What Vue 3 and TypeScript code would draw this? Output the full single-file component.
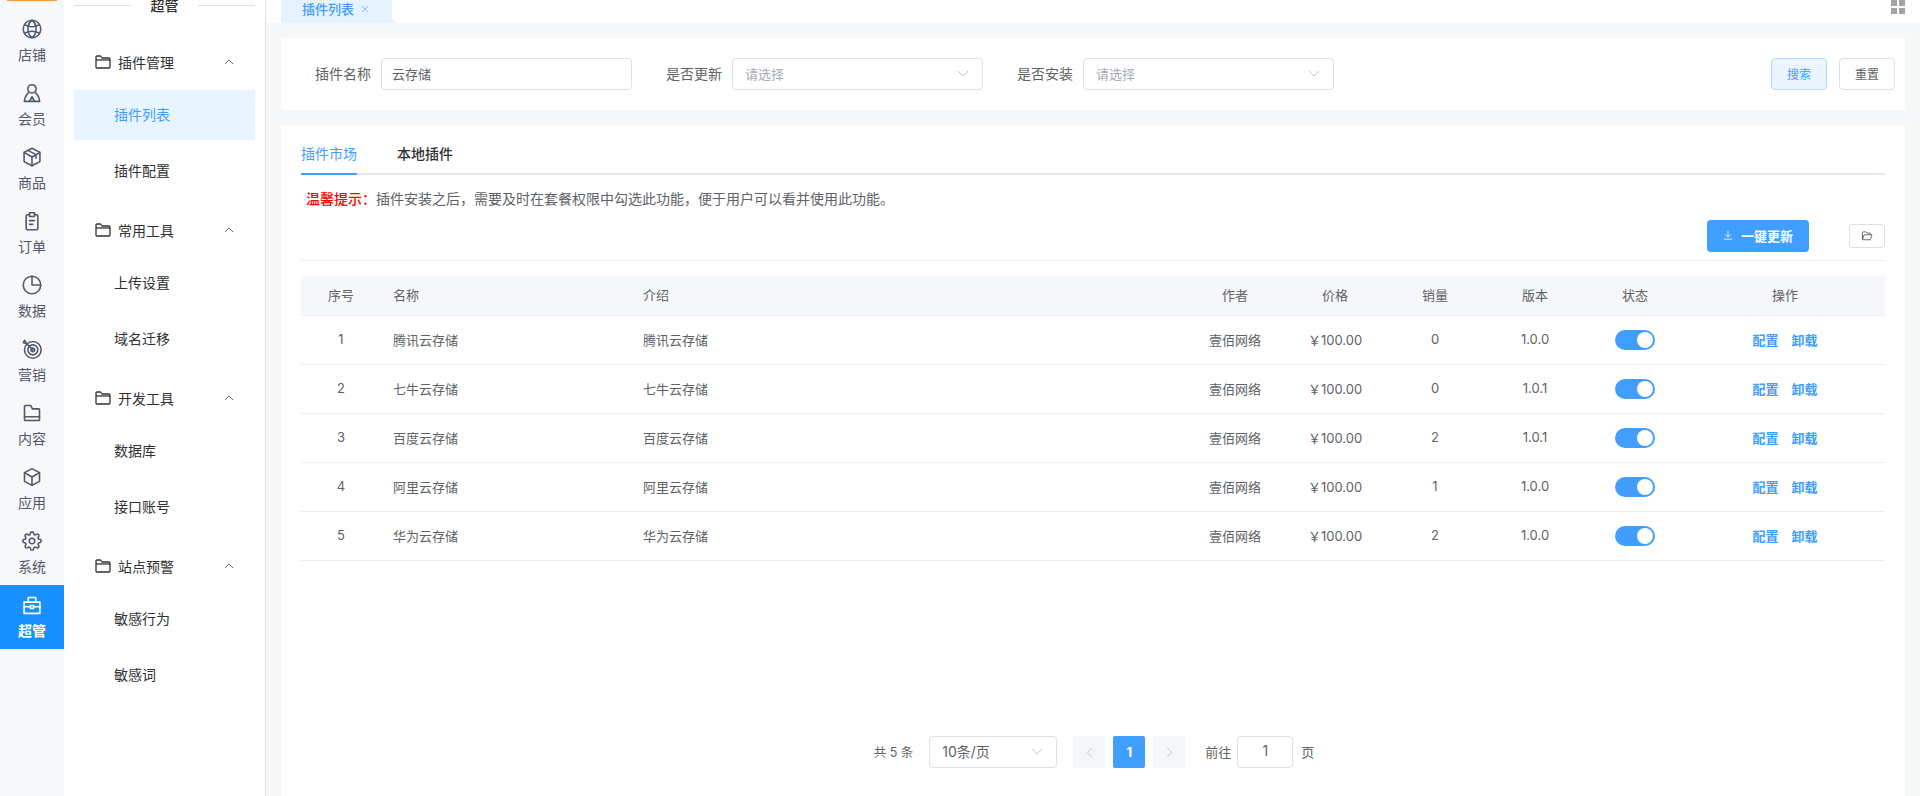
<script setup lang="ts">
import { ref } from 'vue'

const ring = (cx: number, cy: number, r: number): string =>
  `M${cx - r} ${cy}a${r} ${r} 0 1 0 ${2 * r} 0a${r} ${r} 0 1 0 ${-2 * r} 0z`

const gear =
  'M19.4 15a1.65 1.65 0 0 0 .33 1.82l.06.06a2 2 0 0 1 0 2.83 2 2 0 0 1-2.83 0l-.06-.06a1.65 1.65 0 0 0-1.82-.33 1.65 1.65 0 0 0-1 1.51V21a2 2 0 0 1-2 2 2 2 0 0 1-2-2v-.09A1.65 1.65 0 0 0 9 19.4a1.65 1.65 0 0 0-1.82.33l-.06.06a2 2 0 0 1-2.83 0 2 2 0 0 1 0-2.83l.06-.06a1.65 1.65 0 0 0 .33-1.82 1.65 1.65 0 0 0-1.51-1H3a2 2 0 0 1-2-2 2 2 0 0 1 2-2h.09A1.65 1.65 0 0 0 4.6 9a1.65 1.65 0 0 0-.33-1.82l-.06-.06a2 2 0 0 1 0-2.83 2 2 0 0 1 2.83 0l.06.06a1.65 1.65 0 0 0 1.82.33H9a1.65 1.65 0 0 0 1-1.51V3a2 2 0 0 1 2-2 2 2 0 0 1 2 2v.09a1.65 1.65 0 0 0 1 1.51 1.65 1.65 0 0 0 1.82-.33l.06-.06a2 2 0 0 1 2.83 0 2 2 0 0 1 0 2.83l-.06.06a1.65 1.65 0 0 0-.33 1.82V9a1.65 1.65 0 0 0 1.51 1H21a2 2 0 0 1 2 2 2 2 0 0 1-2 2h-.09a1.65 1.65 0 0 0-1.51 1z'

interface RailItem {
  label: string
  paths: string[]
  active?: boolean
}

const railItems: RailItem[] = [
  { label: '店铺', paths: [ring(12, 12, 10.5), 'M12 1.5c-6.5 5-6.5 16 0 21c6.5-5 6.5-16 0-21z', 'M3.5 7c5 2.6 12 2.6 17 0', 'M3.5 17c5-2.6 12-2.6 17 0'] },
  { label: '会员', paths: [ring(12, 7, 5), 'M8 11.5C5 14 3.3 17.5 2.8 22H21.2C20.7 17.5 19 14 16 11.5', 'M9 22L12 16.5L15 22'] },
  { label: '商品', paths: ['M12 1.5L21.5 6.5V17.5L12 22.5L2.5 17.5V6.5Z', 'M2.5 6.5L12 12L21.5 6.5', 'M12 12V22.5', 'M7.2 4L16.8 9.2V13.5'] },
  { label: '订单', paths: ['M8.5 4.5H6.5a1.5 1.5 0 0 0-1.5 1.5V21a1.5 1.5 0 0 0 1.5 1.5H17.5a1.5 1.5 0 0 0 1.5-1.5V6a1.5 1.5 0 0 0-1.5-1.5H15.5', 'M9 2H15V6.5H9Z', 'M9 11.5H15', 'M9 16H13'] },
  { label: '数据', paths: [ring(12, 12, 10.5), 'M12 1.5V12H22.5'] },
  { label: '营销', paths: [ring(13, 13, 10), ring(13, 13, 6), ring(13, 13, 2.2), 'M13 13L5 5', 'M5 5L1.5 4.5L3 1.5L5 5'] },
  { label: '内容', paths: ['M3 4a1 1 0 0 1 1-1H10.5L12.5 7H20a1 1 0 0 1 1 1V20a1 1 0 0 1-1 1H4a1 1 0 0 1-1-1Z', 'M3 16.5H21'] },
  { label: '应用', paths: ['M12 2L21 6.8V17.2L12 22L3 17.2V6.8Z', 'M3 6.8L12 12L21 6.8', 'M12 12V22'] },
  { label: '系统', paths: [gear, ring(12, 12, 3.3)] },
  { label: '超管', active: true, paths: ['M2.5 8.5H21.5V22H2.5Z', 'M7.5 8.5V3H16.5V8.5', 'M2.5 14H10', 'M14 14H21.5', 'M10 12.5H14V16H10Z'] },
]

interface MenuGroup {
  title: string
  items: string[]
}

const menuGroups: MenuGroup[] = [
  { title: '插件管理', items: ['插件列表', '插件配置'] },
  { title: '常用工具', items: ['上传设置', '域名迁移'] },
  { title: '开发工具', items: ['数据库', '接口账号'] },
  { title: '站点预警', items: ['敏感行为', '敏感词'] },
]

const keyword = ref('云存储')
const activeTab = ref('插件市场')
const tabs = ['插件市场', '本地插件']

const rows = ref([
  { id: 1, name: '腾讯云存储', version: '1.0.0', sales: 0, on: true },
  { id: 2, name: '七牛云存储', version: '1.0.1', sales: 0, on: true },
  { id: 3, name: '百度云存储', version: '1.0.1', sales: 2, on: true },
  { id: 4, name: '阿里云存储', version: '1.0.0', sales: 1, on: true },
  { id: 5, name: '华为云存储', version: '1.0.0', sales: 2, on: true },
])
</script>

<template>
  <div class="app">
    <aside class="rail">
      <div class="logo"></div>
      <a v-for="item in railItems" :key="item.label" class="rail-item" :class="{ active: item.active }">
        <svg class="rail-icon" viewBox="0 0 24 24" fill="none" stroke="currentColor" stroke-width="1.9" stroke-linejoin="round" stroke-linecap="round">
          <path v-for="d in item.paths" :key="d" :d="d" />
        </svg>
        <span>{{ item.label }}</span>
      </a>
    </aside>

    <nav class="subnav">
      <div class="subnav-title"><i></i><span>超管</span><i></i></div>
      <section v-for="group in menuGroups" :key="group.title" class="group">
        <div class="group-head">
          <svg class="folder" viewBox="0 0 16 14" fill="none" stroke="currentColor" stroke-width="1.3" stroke-linejoin="round">
            <path d="M1 2a1 1 0 0 1 1-1h3.6l1.4 2h7a1 1 0 0 1 1 1v8a1 1 0 0 1-1 1H2a1 1 0 0 1-1-1Z" />
            <path d="M1 5H15" />
          </svg>
          <span class="group-title">{{ group.title }}</span>
          <svg class="caret" viewBox="0 0 10 6" fill="none" stroke="currentColor" stroke-width="1">
            <path d="M1 5L5 1L9 5" />
          </svg>
        </div>
        <a v-for="m in group.items" :key="m" class="menu-item" :class="{ current: m === '插件列表' }">{{ m }}</a>
      </section>
    </nav>

    <main class="main">
      <header class="tagbar">
        <div class="tag">
          <span>插件列表</span>
          <svg class="tag-x" viewBox="0 0 10 10" fill="none" stroke="currentColor" stroke-width="1"><path d="M1 1L9 9M9 1L1 9" /></svg>
        </div>
        <div class="grid-icon"><i></i><i></i><i></i><i></i></div>
      </header>

      <div class="content">
        <form class="card filter" @submit.prevent>
          <label class="field">
            <span class="field-label">插件名称</span>
            <input v-model="keyword" class="text-input" />
          </label>
          <div class="field">
            <span class="field-label">是否更新</span>
            <div class="select">
              <span class="placeholder">请选择</span>
              <svg class="chev" viewBox="0 0 12 7" fill="none" stroke="currentColor" stroke-width="1"><path d="M1 1L6 6L11 1" /></svg>
            </div>
          </div>
          <div class="field">
            <span class="field-label">是否安装</span>
            <div class="select">
              <span class="placeholder">请选择</span>
              <svg class="chev" viewBox="0 0 12 7" fill="none" stroke="currentColor" stroke-width="1"><path d="M1 1L6 6L11 1" /></svg>
            </div>
          </div>
          <div class="actions">
            <button class="btn btn-soft" type="submit">搜索</button>
            <button class="btn" type="button">重置</button>
          </div>
        </form>

        <div class="card panel">
          <div class="tabs">
            <a v-for="t in tabs" :key="t" class="tab" :class="{ on: t === activeTab }" @click="activeTab = t">{{ t }}</a>
          </div>

          <p class="notice"><b>温馨提示：</b>插件安装之后，需要及时在套餐权限中勾选此功能，便于用户可以看并使用此功能。</p>

          <div class="toolbar">
            <button class="btn-primary" type="button">
              <svg viewBox="0 0 12 12" fill="none" stroke="currentColor" stroke-width="1"><path d="M6 1V8M3 5.5L6 8.5L9 5.5M1 11H11" /></svg>
              <span>一键更新</span>
            </button>
            <button class="btn-icon" type="button" aria-label="文件夹">
              <svg viewBox="0 0 14 12" fill="none" stroke="currentColor" stroke-width="1.1" stroke-linejoin="round"><path d="M1.5 10.5V2a1 1 0 0 1 1-1H5.5L7 2.5H11V4.5" /><path d="M1.5 10.5L3.5 4.5H13L11 10.5Z" /></svg>
            </button>
          </div>

          <table class="table">
            <colgroup>
              <col class="w80" /><col class="w250" /><col /><col class="w100" /><col class="w100" /><col class="w100" /><col class="w100" /><col class="w100" /><col class="w200" />
            </colgroup>
            <thead>
              <tr>
                <th class="c">序号</th><th>名称</th><th>介绍</th><th class="c">作者</th><th class="c">价格</th><th class="c">销量</th><th class="c">版本</th><th class="c">状态</th><th class="c">操作</th>
              </tr>
            </thead>
            <tbody>
              <tr v-for="r in rows" :key="r.id">
                <td class="c">{{ r.id }}</td>
                <td>{{ r.name }}</td>
                <td>{{ r.name }}</td>
                <td class="c">壹佰网络</td>
                <td class="c">￥100.00</td>
                <td class="c">{{ r.sales }}</td>
                <td class="c">{{ r.version }}</td>
                <td class="c sw"><span class="switch" :class="{ on: r.on }" @click="r.on = !r.on"><i></i></span></td>
                <td class="c ops"><a>配置</a><a>卸载</a></td>
              </tr>
            </tbody>
          </table>

          <div class="pager">
            <span class="total">共 5 条</span>
            <div class="select page-size">
              <span>10条/页</span>
              <svg class="chev" viewBox="0 0 12 7" fill="none" stroke="currentColor" stroke-width="1"><path d="M1 1L6 6L11 1" /></svg>
            </div>
            <button class="pg" type="button" aria-label="上一页"><svg viewBox="0 0 7 12" fill="none" stroke="currentColor" stroke-width="1"><path d="M6 1L1 6L6 11" /></svg></button>
            <button class="pg current" type="button">1</button>
            <button class="pg" type="button" aria-label="下一页"><svg viewBox="0 0 7 12" fill="none" stroke="currentColor" stroke-width="1"><path d="M1 1L6 6L1 11" /></svg></button>
            <span class="goto">前往</span>
            <div class="page-input">1</div>
            <span class="unit">页</span>
          </div>
        </div>
      </div>
    </main>
  </div>
</template>

<style>
html,
body {
  margin: 0;
  padding: 0;
  overflow: hidden;
}
</style>

<style scoped>
.app {
  display: flex;
  width: 1920px;
  height: 796px;
  overflow: hidden;
  font-family: Inter, "Noto Sans CJK SC", sans-serif;
  font-size: 14px;
  color: #606266;
  background: #f6f7f9;
}

/* rail */
.rail {
  width: 64px;
  flex: none;
  background: #f7f8fa;
}
.logo {
  width: 50px;
  height: 1px;
  margin: 0 auto 8px;
  background: #ff9a2e;
}
.rail-item {
  display: block;
  height: 64px;
  padding-top: 10px;
  box-sizing: border-box;
  text-align: center;
  color: #4e5969;
}
.rail-item span {
  display: block;
  margin-top: 5px;
  line-height: 22px;
}
.rail-icon {
  display: block;
  width: 20px;
  height: 20px;
  margin: 0 auto;
}
.rail-item.active {
  background: #1890ff;
  color: #fff;
}
.rail-item.active span {
  font-weight: 700;
}

/* sub navigation */
.subnav {
  width: 202px;
  flex: none;
  box-sizing: border-box;
  padding: 0 10px;
  background: #fff;
  border-right: 1px solid #dcdfe6;
  color: #303133;
}
.subnav-title {
  display: flex;
  align-items: center;
  justify-content: space-between;
  height: 20px;
  margin: -5px 0 22px;
  font-weight: 500;
}
.subnav-title i {
  display: block;
  width: 57px;
  height: 1px;
  background: #dcdfe6;
}
.group {
  padding-bottom: 3px;
}
.group-head {
  display: flex;
  align-items: center;
  height: 50px;
  margin-bottom: 3px;
  padding-left: 21px;
  padding-right: 21px;
}
.folder {
  width: 16px;
  height: 14px;
  margin-right: 7px;
  color: #303133;
}
.group-title {
  flex: 1;
}
.caret {
  width: 10px;
  height: 6px;
  color: #606266;
}
.menu-item {
  display: block;
  height: 50px;
  margin-bottom: 6px;
  padding-left: 40px;
  line-height: 50px;
}
.menu-item.current {
  background: #e8f4ff;
  color: #409eff;
}

/* main */
.main {
  flex: 1;
  min-width: 0;
  display: flex;
  flex-direction: column;
}
.tagbar {
  flex: none;
  display: flex;
  justify-content: space-between;
  height: 23px;
  padding: 0 15px;
  background: #fff;
}
.tag {
  position: relative;
  display: flex;
  align-items: flex-start;
  width: 111px;
  height: 23px;
  box-sizing: border-box;
  padding: 0 0 0 21px;
  background: #e5f2ff;
  color: #409eff;
  font-size: 13px;
  font-weight: 500;
  line-height: 18px;
}
.tag::after {
  content: "";
  position: absolute;
  left: 100%;
  bottom: 0;
  width: 8px;
  height: 8px;
  background: radial-gradient(circle at 100% 0, transparent 8px, #e5f2ff 8.5px);
}
.tag-x {
  width: 8px;
  height: 8px;
  margin: 5px 0 0 7px;
  color: #6fb0f5;
}
.grid-icon {
  display: grid;
  grid-template-columns: 6px 6px;
  grid-auto-rows: 6px;
  gap: 2px;
}
.grid-icon i {
  background: #a3a3a3;
}
.content {
  flex: 1;
  min-height: 0;
  display: flex;
  flex-direction: column;
  gap: 15px;
  padding: 15px 15px 0;
}
.card {
  background: #fff;
}

/* filter */
.filter {
  flex: none;
  display: flex;
  align-items: center;
  height: 72px;
  padding: 0 10px 0 34px;
}
.field {
  display: flex;
  align-items: center;
  margin-right: 34px;
}
.field-label {
  margin-right: 10px;
  padding-bottom: 2px;
  color: #606266;
}
.text-input {
  width: 251px;
  height: 32px;
  box-sizing: border-box;
  padding: 0 10px 2px;
  border: 1px solid #dcdfe6;
  border-radius: 4px;
  outline: none;
  font: inherit;
  font-size: 13px;
  color: #606266;
}
.select {
  display: flex;
  align-items: center;
  justify-content: space-between;
  width: 251px;
  height: 32px;
  box-sizing: border-box;
  padding: 0 13px 2px 12px;
  border: 1px solid #dcdfe6;
  border-radius: 4px;
  background: #fff;
  font-size: 13px;
}
.placeholder {
  color: #a8abb2;
}
.chev {
  width: 12px;
  height: 7px;
  color: #c0c4cc;
}
.actions {
  display: flex;
  gap: 12px;
  margin-left: auto;
}
.btn {
  width: 56px;
  height: 32px;
  padding: 0 0 2px;
  border: 1px solid #dcdfe6;
  border-radius: 4px;
  background: #fff;
  font: inherit;
  font-size: 12px;
  color: #606266;
}
.btn-soft {
  background: #ecf5ff;
  border-color: #b3d8ff;
  color: #409eff;
}

/* panel */
.panel {
  flex: 1;
  min-height: 0;
  display: flex;
  flex-direction: column;
  padding: 10px 20px 28px;
}
.tabs {
  flex: none;
  display: flex;
  gap: 40px;
  height: 40px;
  box-sizing: border-box;
  border-bottom: 2px solid #e4e7ed;
}
.tab {
  height: 40px;
  box-sizing: border-box;
  line-height: 38px;
  font-weight: 500;
  color: #303133;
}
.tab.on {
  border-bottom: 2px solid #409eff;
  color: #409eff;
  font-weight: 400;
}
.notice {
  margin: 14px 0 11px;
  padding-left: 5px;
  line-height: 20px;
  color: #606266;
}
.notice b {
  color: #f00;
  font-weight: 500;
}
.toolbar {
  flex: none;
  display: flex;
  align-items: center;
  justify-content: flex-end;
  gap: 40px;
  padding-bottom: 8px;
  border-bottom: 1px solid #ebeef5;
}
.btn-primary {
  display: flex;
  align-items: center;
  justify-content: center;
  gap: 8px;
  width: 102px;
  height: 32px;
  padding: 0 0 2px;
  border: none;
  border-radius: 4px;
  background: #409eff;
  color: #fff;
  font: inherit;
  font-size: 13px;
  font-weight: 700;
}
.btn-primary svg {
  width: 10px;
  height: 10px;
}
.btn-icon {
  display: flex;
  align-items: center;
  justify-content: center;
  width: 36px;
  height: 24px;
  padding: 0;
  border: 1px solid #dcdfe6;
  border-radius: 3px;
  background: #fff;
  color: #606266;
}
.btn-icon svg {
  width: 12px;
  height: 10px;
}

/* table */
.table {
  flex: none;
  width: 100%;
  margin-top: 15px;
  table-layout: fixed;
  border-collapse: separate;
  border-spacing: 0;
  font-size: 13px;
  color: #606266;
}
.w80 {
  width: 80px;
}
.w100 {
  width: 100px;
}
.w200 {
  width: 200px;
}
.w250 {
  width: 250px;
}
.table th,
.table td {
  box-sizing: border-box;
  padding: 0 0 2px 12px;
  border-bottom: 1px solid #ebeef5;
  text-align: left;
  font-weight: 400;
}
.table th {
  height: 40px;
  background: #f5f7fb;
}
.table td {
  height: 49px;
}
.table .c {
  padding: 0 0 2px;
  text-align: center;
}
.table .sw {
  padding-bottom: 0;
}
.switch {
  display: inline-block;
  position: relative;
  width: 40px;
  height: 20px;
  border-radius: 10px;
  background: #dcdfe6;
  vertical-align: middle;
}
.switch.on {
  background: #409eff;
}
.switch i {
  position: absolute;
  top: 2px;
  left: 2px;
  width: 16px;
  height: 16px;
  border-radius: 50%;
  background: #fff;
}
.switch.on i {
  left: 22px;
}
.ops a {
  margin: 0 6.5px;
  color: #409eff;
  font-weight: 700;
}

/* pagination */
.pager {
  flex: none;
  display: flex;
  align-items: center;
  justify-content: center;
  height: 32px;
  margin-top: auto;
  padding-left: 2px;
  font-size: 13px;
  color: #606266;
}
.total {
  margin-right: 16px;
  padding-bottom: 2px;
  font-size: 12.5px;
}
.page-size {
  width: 128px;
  margin-right: 16px;
  font-size: 14px;
}
.pg {
  display: flex;
  align-items: center;
  justify-content: center;
  width: 32px;
  height: 32px;
  margin-right: 8px;
  padding: 0;
  border: none;
  border-radius: 2px;
  background: #f4f6fa;
  color: #c0c4cc;
  font: inherit;
}
.pg svg {
  width: 7px;
  height: 11px;
}
.pg.current {
  background: #409eff;
  color: #fff;
  font-weight: 700;
}
.goto {
  margin-left: 12px;
  margin-right: 6px;
  padding-bottom: 2px;
}
.page-input {
  width: 56px;
  height: 32px;
  box-sizing: border-box;
  border: 1px solid #dcdfe6;
  border-radius: 4px;
  line-height: 28px;
  text-align: center;
  font-size: 14px;
}
.unit {
  margin-left: 8px;
  padding-bottom: 2px;
}
</style>
